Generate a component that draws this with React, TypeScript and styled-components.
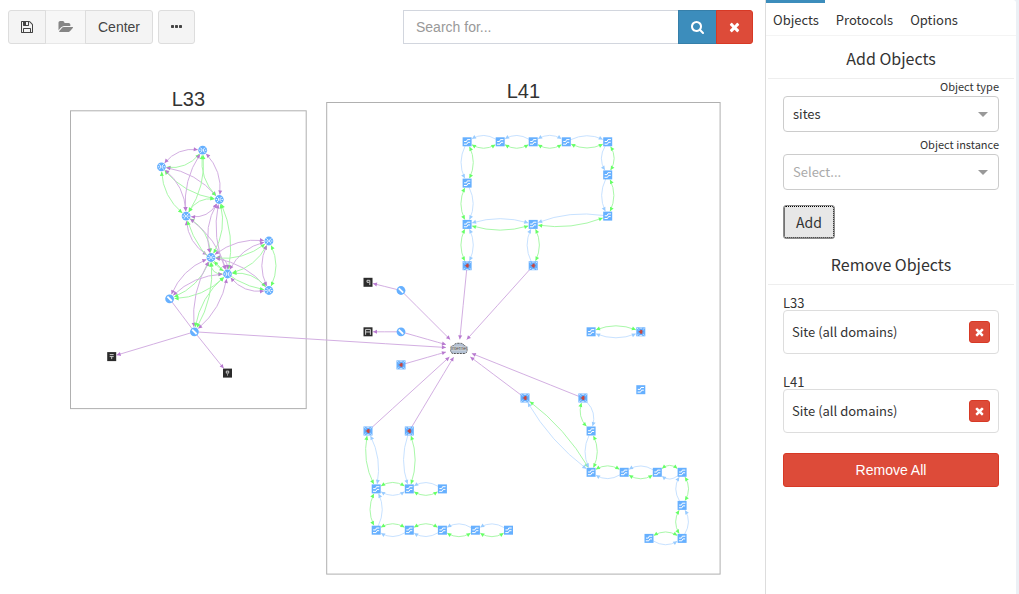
import React from "react";
import styled, { createGlobalStyle, css } from "styled-components";

const GlobalStyle = createGlobalStyle`
  *, *::before, *::after { box-sizing: border-box; }
  body {
    margin: 0;
    background: #ecf0f5;
    color: #333;
    font-family: "Noto Sans CJK SC", "Noto Sans", sans-serif;
    font-size: 13px;
    line-height: 20px;
  }
  button, input, select { font: inherit; color: inherit; margin: 0; }
`;

const Page = styled.div`
  display: flex;
  min-height: 100vh;
  padding-right: 3px;
`;

const Workspace = styled.main`
  flex: 1;
  min-width: 0;
  background: #fff;
`;

const Toolbar = styled.div`
  display: flex;
  justify-content: space-between;
  gap: 16px;
  padding: 10px 12px 10px 8px;
  font-family: "Liberation Sans", Arial, sans-serif;
  font-size: 14px;
`;

const ButtonGroups = styled.div`
  display: flex;
  gap: 5px;
`;

const ButtonGroup = styled.div`
  display: flex;
  & > button + button { margin-left: -1px; }
  & > button:not(:first-child) { border-top-left-radius: 0; border-bottom-left-radius: 0; }
  & > button:not(:last-child) { border-top-right-radius: 0; border-bottom-right-radius: 0; }
`;

type Tone = "default" | "primary" | "danger";

const tones: Record<Tone, ReturnType<typeof css>> = {
  default: css`
    background: #f4f4f4;
    border-color: #ddd;
    color: #444;
  `,
  primary: css`
    background: #3c8dbc;
    border-color: #367fa9;
    color: #fff;
  `,
  danger: css`
    background: #dd4b39;
    border-color: #d73925;
    color: #fff;
  `,
};

const Button = styled.button<{ $tone?: Tone }>`
  display: inline-flex;
  align-items: center;
  justify-content: center;
  height: 34px;
  padding: 0 12px;
  border: 1px solid;
  border-radius: 3px;
  cursor: pointer;
  ${(p) => tones[p.$tone ?? "default"]}
  &:disabled { opacity: 0.65; cursor: not-allowed; }
`;

const SearchForm = styled.form`
  display: flex;
  width: 350px;
  & > button:not(:last-child) { border-radius: 0; }
  & > button:last-child { border-radius: 0 3px 3px 0; margin-left: -1px; }
`;

const SearchInput = styled.input`
  flex: 1;
  min-width: 0;
  height: 34px;
  padding: 0 12px;
  border: 1px solid #d2d6de;
  border-right: 0;
  border-radius: 0;
  background: #fff;
  &::placeholder { color: #999; opacity: 1; }
`;

const Graph = styled.svg`
  display: block;
  width: 100%;
  height: auto;
`;

const Sidebar = styled.aside`
  flex: none;
  width: 251px;
  background: #fff;
  border-left: 1px solid #ddd;
  border-top-right-radius: 3px;
`;

const Tabs = styled.nav`
  display: flex;
  gap: 4px;
  height: 36px;
  border-bottom: 1px solid #f4f4f4;
`;

const Tab = styled.a<{ $active?: boolean }>`
  padding: 7px 6px 0 7px;
  border-top: 3px solid ${(p) => (p.$active ? "#3c8dbc" : "transparent")};
  color: #333;
  text-decoration: none;
`;

const SectionTitle = styled.h2`
  margin: 0 2px;
  padding: 11px 0 9px;
  border-bottom: 1px solid #eee;
  font-size: 16px;
  font-weight: 400;
  line-height: 22px;
  text-align: center;
`;

const SectionBody = styled.div`
  padding: 0 17px;
`;

const Field = styled.div`
  display: flex;
  flex-direction: column;
  margin-bottom: 5px;
`;

const FieldLabel = styled.label`
  padding-bottom: 2px;
  font-size: 11px;
  line-height: 15px;
  text-align: right;
`;

const SelectWrap = styled.div`
  position: relative;
  &::after {
    content: "";
    position: absolute;
    right: 11px;
    top: 16px;
    border: 5px solid transparent;
    border-top-color: #999;
    border-bottom: 0;
    pointer-events: none;
  }
`;

const Select = styled.select<{ $empty?: boolean }>`
  display: block;
  width: 100%;
  height: 36px;
  padding: 0 30px 0 9px;
  appearance: none;
  border: 1px solid #ccc;
  border-radius: 4px;
  background: #fff;
  color: ${(p) => (p.$empty ? "#aaa" : "#333")};
`;

const AddButton = styled(Button)`
  margin: 10px 0 3px;
  background: #e7e7e7;
  border-color: #8c8c8c;
  color: #333;
  font-size: 14px;
  outline: 1px dotted #000;
  outline-offset: -2px;
`;

const ObjectEntry = styled.section`
  margin-bottom: 20px;
`;

const ObjectName = styled.h3`
  margin: 0;
  font-size: 13px;
  font-weight: 400;
  line-height: 15px;
`;

const ObjectCard = styled.div`
  display: flex;
  align-items: center;
  justify-content: space-between;
  height: 44px;
  padding: 0 8px;
  border: 1px solid #ddd;
  border-radius: 4px;
`;

const SmallButton = styled(Button)`
  width: 21px;
  height: 22px;
  padding: 0;
`;

const ObjectList = styled(SectionBody)`
  padding-top: 10px;
`;

const RemoveAll = styled(Button)`
  width: 100%;
  font-family: "Liberation Sans", Arial, sans-serif;
  font-size: 14px;
`;

const icons = {
  save: { width: 12, box: "128 0 1536 1792", d: "M512 1536h768v-384h-768v384zm896 0h128v-896q0-14-10-38.5t-20-34.5l-281-281q-10-10-34-20t-39-10v416q0 40-28 68t-68 28h-576q-40 0-68-28t-28-68v-416h-128v1280h128v-416q0-40 28-68t68-28h832q40 0 68 28t28 68v416zm-384-928v-320q0-13-9.5-22.5t-22.5-9.5h-192q-13 0-22.5 9.5t-9.5 22.5v320q0 13 9.5 22.5t22.5 9.5h192q13 0 22.5-9.5t9.5-22.5zm640 32v928q0 40-28 68t-68 28h-1344q-40 0-68-28t-28-68v-1344q0-40 28-68t68-28h928q40 0 88 20t76 48l280 280q28 28 48 76t20 88z" },
  folder: { width: 15, box: "0 0 1943 1792", d: "M1943 952q0 31-31 66l-336 396q-43 51-120.5 86.5t-143.5 35.5h-1088q-34 0-60.5-13t-26.5-43q0-31 31-66l336-396q43-51 120.5-86.5t143.5-35.5h1088q34 0 60.5 13t26.5 43zm-343-344v160h-832q-94 0-197 47.5t-164 119.5l-337 396-5 6q0-4-.5-12.5t-.5-12.5v-960q0-92 66-158t158-66h320q92 0 158 66t66 158v32h544q92 0 158 66t66 158z" },
  dots: { width: 11, box: "192 0 1408 1792", d: "M576 736v192q0 40-28 68t-68 28h-192q-40 0-68-28t-28-68v-192q0-40 28-68t68-28h192q40 0 68 28t28 68zm512 0v192q0 40-28 68t-68 28h-192q-40 0-68-28t-28-68v-192q0-40 28-68t68-28h192q40 0 68 28t28 68zm512 0v192q0 40-28 68t-68 28h-192q-40 0-68-28t-28-68v-192q0-40 28-68t68-28h192q40 0 68 28t28 68z" },
  search: { width: 13, box: "64 0 1664 1792", d: "M1216 832q0-185-131.5-316.5t-316.5-131.5-316.5 131.5-131.5 316.5 131.5 316.5 316.5 131.5 316.5-131.5 131.5-316.5zm512 832q0 52-38 90t-90 38q-54 0-90-38l-343-342q-179 124-399 124-143 0-273.5-55.5t-225-150-150-225-55.5-273.5 55.5-273.5 150-225 225-150 273.5-55.5 273.5 55.5 225 150 150 225 55.5 273.5q0 220-124 399l343 343q37 37 37 90z" },
  times: { width: 11, box: "192 0 1408 1792", d: "M1490 1322q0 40-28 68l-136 136q-28 28-68 28t-68-28l-294-294-294 294q-28 28-68 28t-68-28l-136-136q-28-28-28-68t28-68l294-294-294-294q-28-28-28-68t28-68l136-136q28-28 68-28t68 28l294 294 294-294q28-28 68-28t68 28l136 136q28 28 28 68t-28 68l-294 294 294 294q28 28 28 68z" },
};

function Icon({ name, height = 14 }: { name: keyof typeof icons; height?: number }) {
  const icon = icons[name];
  return (
    <svg width={icon.width} height={height} viewBox={icon.box} fill="currentColor" aria-hidden="true">
      <path d={icon.d} />
    </svg>
  );
}

type Kind = "router" | "switch" | "link" | "host" | "cloud";
type GraphNode = { x: number; y: number; kind: Kind; glyph?: number };

const nodes: Record<string, GraphNode> = {
  A: { x: 161.4, y: 166.8, kind: "router", glyph: 1 },
  B: { x: 202.7, y: 150.2, kind: "router", glyph: 1 },
  C: { x: 219.3, y: 199.5, kind: "router", glyph: 1 },
  D: { x: 186.1, y: 216.1, kind: "router", glyph: 1 },
  E: { x: 211, y: 257.5, kind: "router", glyph: 1 },
  F: { x: 227.5, y: 274, kind: "router", glyph: 1 },
  G: { x: 268.9, y: 241, kind: "router", glyph: 1 },
  H: { x: 268.9, y: 290.5, kind: "router", glyph: 1 },
  I: { x: 169.6, y: 298.8, kind: "router" },
  J: { x: 194.4, y: 331.8, kind: "router" },
  K: { x: 111.7, y: 356.6, kind: "host", glyph: 0 },
  L: { x: 227.5, y: 373.1, kind: "host", glyph: 1 },
  h1: { x: 368, y: 282.3, kind: "host", glyph: 2 },
  h2: { x: 368, y: 331.8, kind: "host", glyph: 3 },
  r1: { x: 401, y: 290.5, kind: "router" },
  r2: { x: 401, y: 331.8, kind: "router" },
  k0: { x: 401, y: 364.9, kind: "link" },
  cloud: { x: 458.9, y: 348.3, kind: "cloud" },
  a1: { x: 467.1, y: 141.8, kind: "switch" },
  a2: { x: 500.2, y: 141.8, kind: "switch" },
  a3: { x: 533.2, y: 141.8, kind: "switch" },
  a4: { x: 566.3, y: 141.8, kind: "switch" },
  a5: { x: 607.7, y: 141.8, kind: "switch" },
  a6: { x: 607.7, y: 174.9, kind: "switch" },
  a7: { x: 607.7, y: 216.1, kind: "switch" },
  a8: { x: 533.2, y: 224.4, kind: "switch" },
  a9: { x: 467.1, y: 224.4, kind: "switch" },
  a10: { x: 467.1, y: 183.1, kind: "switch" },
  k1: { x: 467.1, y: 265.7, kind: "link" },
  k2: { x: 533.2, y: 265.7, kind: "link" },
  k3: { x: 368, y: 431, kind: "link" },
  k4: { x: 409.3, y: 431, kind: "link" },
  b1: { x: 376.2, y: 488.9, kind: "switch" },
  b2: { x: 409.3, y: 488.9, kind: "switch" },
  b3: { x: 442.4, y: 488.9, kind: "switch" },
  b4: { x: 376.2, y: 530.2, kind: "switch" },
  b5: { x: 409.3, y: 530.2, kind: "switch" },
  b6: { x: 442.4, y: 530.2, kind: "switch" },
  b7: { x: 475.4, y: 530.2, kind: "switch" },
  b8: { x: 508.5, y: 530.2, kind: "switch" },
  c1: { x: 591.1, y: 331.8, kind: "switch" },
  k5: { x: 640.8, y: 331.8, kind: "link" },
  c2: { x: 640.8, y: 389.7, kind: "switch" },
  k6: { x: 525, y: 398, kind: "link" },
  k7: { x: 582.9, y: 398, kind: "link" },
  d1: { x: 591.1, y: 431, kind: "switch" },
  d2: { x: 591.1, y: 472.3, kind: "switch" },
  d3: { x: 624.2, y: 472.3, kind: "switch" },
  d4: { x: 657.3, y: 472.3, kind: "switch" },
  d5: { x: 682.1, y: 472.3, kind: "switch" },
  d6: { x: 682.1, y: 505.4, kind: "switch" },
  d7: { x: 682.1, y: 538.4, kind: "switch" },
  d8: { x: 649, y: 538.4, kind: "switch" },
};

const edgeColors = {
  purple: { line: "#d3afe2", arrow: "#b87ad0" },
  green: { line: "#a9f8a9", arrow: "#66ff66" },
  blue: { line: "#c8e2ff", arrow: "#99ccff" },
};

type Arrows = "both" | "start" | "end" | "none";
type Edge = [string, string, keyof typeof edgeColors, number, Arrows];

/* A pair of edges bowed to opposite sides; the bow is positive to the right of travel. */
const pair = (
  from: string,
  to: string,
  color: "purple" | "blue",
  side: 1 | -1,
  arrows: Arrows = "both",
): Edge[] => {
  const bow = color === "purple" ? 12 : 10;
  return [
    [from, to, color, side * bow, arrows],
    [from, to, "green", -side * bow, "both"],
  ];
};

const edges: Edge[] = [
  ...pair("A", "B", "purple", -1),
  ...pair("A", "C", "purple", -1),
  ...pair("A", "D", "purple", -1),
  ...pair("B", "D", "purple", 1),
  ...pair("B", "C", "purple", -1),
  ...pair("D", "C", "purple", 1),
  ...pair("D", "E", "purple", 1),
  ...pair("D", "F", "purple", -1),
  ...pair("C", "E", "purple", 1),
  ...pair("C", "F", "purple", 1),
  ...pair("E", "F", "purple", -1),
  ...pair("E", "G", "purple", -1),
  ...pair("F", "G", "purple", -1),
  ...pair("E", "H", "purple", -1),
  ...pair("F", "H", "purple", 1),
  ...pair("G", "H", "purple", 1),
  ...pair("E", "I", "purple", 1),
  ...pair("F", "I", "purple", 1),
  ...pair("E", "J", "purple", 1),
  ...pair("F", "J", "purple", -1),
  ["I", "J", "purple", 0, "none"],
  ["J", "K", "purple", 0, "end"],
  ["J", "L", "purple", 0, "end"],
  ["J", "cloud", "purple", 0, "end"],
  ["r1", "h1", "purple", 0, "end"],
  ["r2", "h2", "purple", 0, "end"],
  ...["r1", "r2", "k0", "k1", "k2", "k3", "k4", "k6", "k7"].map(
    (id): Edge => [id, "cloud", "purple", 0, "end"],
  ),
  ...pair("a1", "a2", "blue", -1, "start"),
  ...pair("a2", "a3", "blue", -1, "start"),
  ...pair("a3", "a4", "blue", -1),
  ...pair("a4", "a5", "blue", -1, "end"),
  ...pair("a5", "a6", "blue", 1, "end"),
  ...pair("a6", "a7", "blue", 1, "end"),
  ...pair("a1", "a10", "blue", 1, "end"),
  ...pair("a10", "a9", "blue", -1, "end"),
  ...pair("a9", "k1", "blue", -1),
  ...pair("a9", "a8", "blue", -1),
  ...pair("a8", "a7", "blue", -1, "start"),
  ...pair("a8", "k2", "blue", 1, "start"),
  ...pair("k3", "b1", "blue", -1),
  ...pair("k4", "b2", "blue", 1, "end"),
  ...pair("b1", "b2", "blue", 1),
  ...pair("b2", "b3", "blue", -1, "start"),
  ...pair("b1", "b4", "blue", -1, "start"),
  ...pair("b4", "b5", "blue", 1, "start"),
  ...pair("b5", "b6", "blue", 1, "start"),
  ...pair("b6", "b7", "blue", -1, "start"),
  ...pair("b7", "b8", "blue", -1, "start"),
  ...pair("c1", "k5", "blue", 1),
  ...pair("k6", "d2", "blue", 1),
  ...pair("k7", "d1", "blue", -1, "end"),
  ...pair("d1", "d2", "blue", 1, "end"),
  ...pair("d2", "d3", "blue", 1, "start"),
  ...pair("d3", "d4", "blue", -1, "start"),
  ...pair("d4", "d5", "blue", 1, "start"),
  ...pair("d5", "d6", "blue", 1, "start"),
  ...pair("d6", "d7", "blue", -1, "start"),
  ...pair("d8", "d7", "blue", 1, "end"),
];

type Point = { x: number; y: number };

function leave(node: GraphNode, toward: Point, gap: number) {
  const dx = toward.x - node.x;
  const dy = toward.y - node.y;
  const len = Math.hypot(dx, dy);
  const ux = dx / len;
  const uy = dy / len;
  let reach = 4;
  if (node.kind === "cloud") {
    reach = Math.min(12 / Math.abs(ux || 0.01), 8 / Math.abs(uy || 0.01));
  } else if (node.kind !== "router") {
    reach = 4 / Math.max(Math.abs(ux), Math.abs(uy));
  }
  return { x: node.x + ux * (reach + gap), y: node.y + uy * (reach + gap), ux, uy };
}

function arrowPoints(tip: { x: number; y: number; ux: number; uy: number }) {
  const bx = tip.x + tip.ux * 4;
  const by = tip.y + tip.uy * 4;
  return `${tip.x},${tip.y} ${bx - tip.uy * 2},${by + tip.ux * 2} ${bx + tip.uy * 2},${by - tip.ux * 2}`;
}

function EdgeShape({ edge }: { edge: Edge }) {
  const [fromId, toId, color, bow, arrows] = edge;
  const from = nodes[fromId];
  const to = nodes[toId];
  const dx = to.x - from.x;
  const dy = to.y - from.y;
  const len = Math.hypot(dx, dy);
  const control = {
    x: (from.x + to.x) / 2 - (dy / len) * bow,
    y: (from.y + to.y) / 2 + (dx / len) * bow,
  };
  const atStart = arrows === "both" || arrows === "start";
  const atEnd = arrows === "both" || arrows === "end";
  const a = leave(from, control, atStart ? 1 : 0);
  const b = leave(to, control, atEnd ? 1 : 0);
  const { line, arrow } = edgeColors[color];
  return (
    <g>
      <path d={`M${a.x} ${a.y}Q${control.x} ${control.y} ${b.x} ${b.y}`} fill="none" stroke={line} />
      {atStart && <polygon points={arrowPoints(a)} fill={arrow} />}
      {atEnd && <polygon points={arrowPoints(b)} fill={arrow} />}
    </g>
  );
}

const hostGlyphs = [
  "M-2 -2H2M-2 0H2M0 0V2.5",
  "M-1.2 -2H1.2V0H-1.2ZM0 1.2V2.4",
  "M-1 -2H1.8V2.8M-1 -2V0H1.2",
  "M-2.4 3V-2.4H2.4V3M-2.4 0.2H2.4",
];

function NodeShape({ node }: { node: GraphNode }) {
  const place = `translate(${node.x} ${node.y})`;
  switch (node.kind) {
    case "router":
      return (
        <g transform={place}>
          <circle r="4.4" fill="#66b0ff" />
          {node.glyph ? (
            <path
              d="M-2.4 -2.6L-0.8 -1V1L-2.4 2.6M2.4 -2.6L0.8 -1V1L2.4 2.6M-3.6 0H-2.2M3.6 0H2.2"
              stroke="#fff"
              strokeWidth="0.9"
              fill="none"
            />
          ) : (
            <path d="M-2.2 -2.2L2.2 2.2" stroke="#fff" strokeWidth="1.8" fill="none" />
          )}
        </g>
      );
    case "switch":
      return (
        <g transform={place}>
          <rect x="-4.5" y="-4.5" width="9" height="9" fill="#66b0ff" />
          <path d="M3.2 -2.2H0.2L-0.6 -0.3H-3M3 0.5H0.8L-0.2 2.4H-3.2" stroke="#fff" fill="none" />
        </g>
      );
    case "link":
      return (
        <g transform={place}>
          <rect x="-4.5" y="-4.5" width="9" height="9" fill="#66b0ff" />
          <path
            d="M-3.8 -3.6L-2.4 -2.6M3.8 -3.6L2.4 -2.6M-3.8 3.6L-2.4 2.6M3.8 3.6L2.4 2.6M-1.4 -3.7H1.4M-1.4 3.7H1.4"
            stroke="#dcebff"
            strokeWidth="0.9"
          />
          <path d="M-2.6 0H2.6M0 -2.4V2.4" stroke="#6d7fb5" />
          <path d="M-1.9 0L0 -1.9H1.5V1.9H0Z" fill="#c8473f" />
        </g>
      );
    case "host":
      return (
        <g transform={place}>
          <rect x="-4.5" y="-4.5" width="9" height="9" fill="#2b2b2b" />
          <path d={hostGlyphs[node.glyph ?? 0]} stroke="#ddd" strokeWidth="0.9" fill="none" />
        </g>
      );
    default:
      return (
        <g transform={place}>
          <path
            d="M-6 5.2Q-8.6 4.6 -8.2 1Q-8.4 -2.2 -5.6 -2.6Q-4 -5.4 0 -5Q4 -5.4 5.6 -2.6Q8.4 -2.2 8.2 1Q8.6 4.6 6 5.2Z"
            fill="#b4c2d4"
            stroke="#555"
            strokeDasharray="2 1"
          />
          <text
            y="2"
            textAnchor="middle"
            fontFamily="Liberation Sans"
            fontSize="5"
            fill="#444"
            stroke="#ddd"
            strokeWidth="0.8"
            paintOrder="stroke"
          >
            Internet
          </text>
        </g>
      );
  }
}

const sites = [
  { name: "L33", x: 70.5, y: 110.8, width: 235.7, height: 297.8 },
  { name: "L41", x: 326.7, y: 102.5, width: 393.4, height: 471.6 },
];

function Topology() {
  return (
    <Graph viewBox="0 54 765 540" role="img" aria-label="Network topology">
      {sites.map((s) => (
        <g key={s.name}>
          <rect x={s.x} y={s.y} width={s.width} height={s.height} fill="none" stroke="#b0b0b0" />
          <text
            x={s.x + s.width / 2}
            y={s.y - 5}
            textAnchor="middle"
            fontFamily="Liberation Sans"
            fontSize="20"
            fill="#333"
          >
            {s.name}
          </text>
        </g>
      ))}
      {edges.map((edge, i) => (
        <EdgeShape key={i} edge={edge} />
      ))}
      {Object.entries(nodes).map(([id, node]) => (
        <NodeShape key={id} node={node} />
      ))}
    </Graph>
  );
}

export default function App() {
  return (
    <>
      <GlobalStyle />
      <Page>
        <Workspace>
          <Toolbar>
            <ButtonGroups>
              <ButtonGroup>
                <Button type="button" aria-label="Save"><Icon name="save" /></Button>
                <Button type="button" aria-label="Open" disabled><Icon name="folder" /></Button>
                <Button type="button">Center</Button>
              </ButtonGroup>
              <Button type="button" aria-label="More"><Icon name="dots" /></Button>
            </ButtonGroups>
            <SearchForm onSubmit={(e: React.FormEvent) => e.preventDefault()}>
              <SearchInput type="text" placeholder="Search for..." aria-label="Search for" />
              <Button type="submit" $tone="primary" aria-label="Search"><Icon name="search" /></Button>
              <Button type="button" $tone="danger" aria-label="Clear"><Icon name="times" /></Button>
            </SearchForm>
          </Toolbar>
          <Topology />
        </Workspace>
        <Sidebar>
          <Tabs>
            <Tab href="#objects" $active>Objects</Tab>
            <Tab href="#protocols">Protocols</Tab>
            <Tab href="#options">Options</Tab>
          </Tabs>
          <SectionTitle>Add Objects</SectionTitle>
          <SectionBody>
            <Field>
              <FieldLabel htmlFor="object-type">Object type</FieldLabel>
              <SelectWrap>
                <Select id="object-type" defaultValue="sites">
                  <option value="sites">sites</option>
                </Select>
              </SelectWrap>
            </Field>
            <Field>
              <FieldLabel htmlFor="object-instance">Object instance</FieldLabel>
              <SelectWrap>
                <Select id="object-instance" defaultValue="" $empty>
                  <option value="">Select...</option>
                </Select>
              </SelectWrap>
            </Field>
            <AddButton type="button">Add</AddButton>
          </SectionBody>
          <SectionTitle>Remove Objects</SectionTitle>
          <ObjectList>
            {sites.map((s) => (
              <ObjectEntry key={s.name}>
                <ObjectName>{s.name}</ObjectName>
                <ObjectCard>
                  <span>Site (all domains)</span>
                  <SmallButton type="button" $tone="danger" aria-label={`Remove ${s.name}`}>
                    <Icon name="times" height={12} />
                  </SmallButton>
                </ObjectCard>
              </ObjectEntry>
            ))}
            <RemoveAll type="button" $tone="danger">Remove All</RemoveAll>
          </ObjectList>
        </Sidebar>
      </Page>
    </>
  );
}
